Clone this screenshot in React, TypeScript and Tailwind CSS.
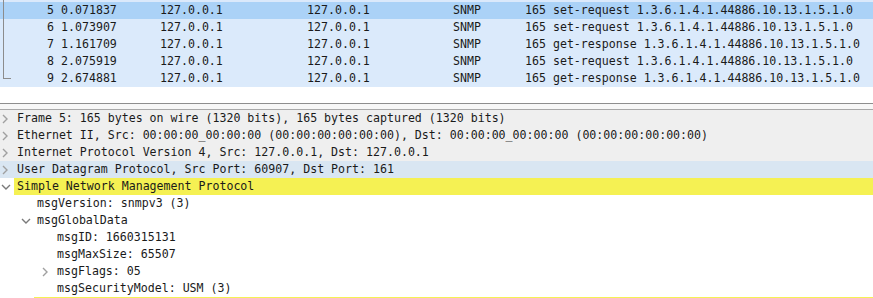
const packets = [
  { no: 5, time: '0.071837', info: 'set-request 1.3.6.1.4.1.44886.10.13.1.5.1.0' },
  { no: 6, time: '1.073907', info: 'set-request 1.3.6.1.4.1.44886.10.13.1.5.1.0' },
  { no: 7, time: '1.161709', info: 'get-response 1.3.6.1.4.1.44886.10.13.1.5.1.0' },
  { no: 8, time: '2.075919', info: 'set-request 1.3.6.1.4.1.44886.10.13.1.5.1.0' },
  { no: 9, time: '2.674881', info: 'get-response 1.3.6.1.4.1.44886.10.13.1.5.1.0' },
];

type Node = {
  text: string;
  level: number;
  arrow?: 'right' | 'down';
  tone?: 'gray' | 'blue' | 'yellow';
};

const tree: Node[] = [
  { text: 'Frame 5: 165 bytes on wire (1320 bits), 165 bytes captured (1320 bits)', level: 0, arrow: 'right', tone: 'gray' },
  { text: 'Ethernet II, Src: 00:00:00_00:00:00 (00:00:00:00:00:00), Dst: 00:00:00_00:00:00 (00:00:00:00:00:00)', level: 0, arrow: 'right', tone: 'gray' },
  { text: 'Internet Protocol Version 4, Src: 127.0.0.1, Dst: 127.0.0.1', level: 0, arrow: 'right', tone: 'gray' },
  { text: 'User Datagram Protocol, Src Port: 60907, Dst Port: 161', level: 0, arrow: 'right', tone: 'blue' },
  { text: 'Simple Network Management Protocol', level: 0, arrow: 'down', tone: 'yellow' },
  { text: 'msgVersion: snmpv3 (3)', level: 1 },
  { text: 'msgGlobalData', level: 1, arrow: 'down' },
  { text: 'msgID: 1660315131', level: 2 },
  { text: 'msgMaxSize: 65507', level: 2 },
  { text: 'msgFlags: 05', level: 2, arrow: 'right' },
  { text: 'msgSecurityModel: USM (3)', level: 2 },
  // next row only peeks in at the bottom edge
  { text: '', level: 1, tone: 'yellow' },
];

function Chevron({ dir }: { dir: 'right' | 'down' }) {
  if (dir === 'right') {
    return (
      <svg width="8" height="10" viewBox="0 0 8 10" className="shrink-0">
        <polyline points="2,1 6,5 2,9" fill="none" stroke="#a0a0a0" strokeWidth="1.4" />
      </svg>
    );
  }
  return (
    <svg width="10" height="8" viewBox="0 0 10 8" className="shrink-0">
      <polyline points="1,2 5,6 9,2" fill="none" stroke="#7a7a7a" strokeWidth="1.4" />
    </svg>
  );
}

function TreeRow({ node }: { node: Node }) {
  const indent = node.level * 20;
  const rowBg = node.tone === 'gray' ? 'bg-[#efefef]' : node.tone === 'blue' ? 'bg-[#d9e6f2]' : 'bg-white';
  return (
    <div className={`flex h-[17px] items-center ${rowBg}`}>
      <div style={{ width: indent }} className="shrink-0" />
      <div className="flex w-[14px] shrink-0 items-center pl-[1px]">
        {node.arrow === 'right' && <Chevron dir="right" />}
        {node.arrow === 'down' && <Chevron dir="down" />}
      </div>
      <div
        className={`flex h-full flex-1 items-center pl-[3px] whitespace-pre ${
          node.tone === 'yellow' ? 'bg-[#f5f153]' : ''
        }`}
      >
        {node.text}
      </div>
    </div>
  );
}

export default function App() {
  return (
    <div className="h-[298px] w-[873px] overflow-hidden bg-white font-['DejaVu_Sans_Mono',monospace] text-[11.6px] text-[#1a1a1a]">
      <div className="h-[103px]">
        <div className="flex h-[2px] bg-[#dbe9fb]">
          <div className="ml-[3px] w-[1px] bg-[#8c8c8c]" />
        </div>
        {packets.map((p, i) => {
          const last = i === packets.length - 1;
          return (
            <div
              key={p.no}
              className={`flex h-[17px] items-center whitespace-pre ${
                p.no === 5 ? 'bg-[#abd2f7]' : 'bg-[#dbeafb]'
              }`}
            >
              <div className="flex h-full w-[12px] shrink-0 flex-col">
                {last ? (
                  <div className="ml-[3px] h-[9px] w-[8px] border-b border-l border-[#8c8c8c]" />
                ) : (
                  <div className="ml-[3px] h-full w-[1px] bg-[#8c8c8c]" />
                )}
              </div>
              <div className="w-[42px] shrink-0 text-right">{p.no}</div>
              <div className="w-[106px] shrink-0 pl-[7px]">{p.time}</div>
              <div className="w-[147px] shrink-0">127.0.0.1</div>
              <div className="w-[146px] shrink-0">127.0.0.1</div>
              <div className="w-[72px] shrink-0">SNMP</div>
              <div className="shrink-0">165 {p.info}</div>
            </div>
          );
        })}
      </div>
      <div className="h-[1px] bg-[#8e8e8e]" />
      <div className="h-[5px] bg-[#f7f7f7]" />
      <div className="h-[1px] bg-[#a8a8a8]" />
      <div>
        {tree.map((n, i) => (
          <TreeRow key={i} node={n} />
        ))}
      </div>
    </div>
  );
}
